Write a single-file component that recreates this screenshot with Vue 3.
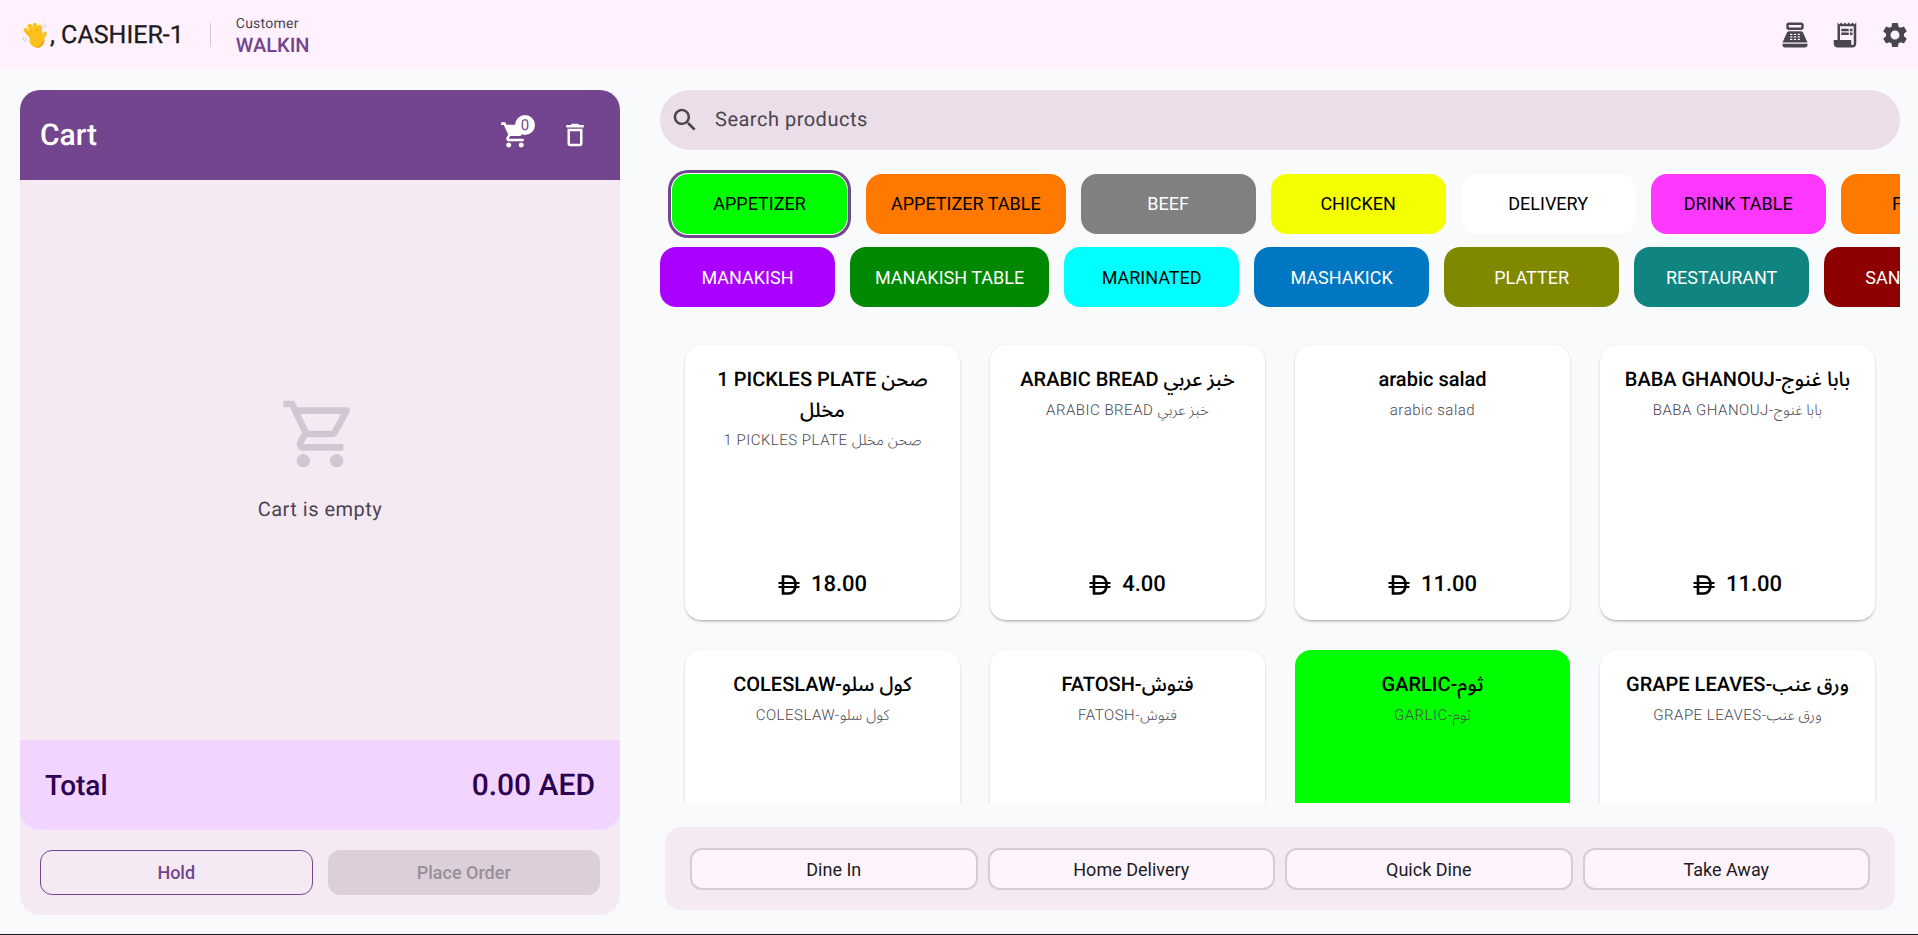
<template>
  <div class="page">
    <header class="topbar">
      <div class="who">
        <svg class="wave" viewBox="0 0 26 26">
          <g fill="none" stroke="#fcc21b" stroke-width="4.4" stroke-linecap="round">
            <path d="M10 15 3.800 8.200" />
            <path d="M12 13 7.800 4" />
            <path d="M15 12 12.800 3" />
            <path d="M18 13 17.800 5" />
            <path d="M19 18 23 11.500" stroke-width="3.800" />
          </g>
          <circle cx="15" cy="18" r="7.600" fill="#fcc21b" />
          <path d="M8 13.500 5.800 11M10.300 11.500 9 8.500M15.200 9.500 14.800 6.500" fill="none" stroke="#e59600" stroke-width=".6" stroke-linecap="round" />
          <path d="M21.500 19c-.8 3.500-3.200 6-6.500 6.400" fill="none" stroke="#f19a14" stroke-width="1.200" stroke-linecap="round" />
          <path d="M1 15.500c.4 1.800 1.300 3.500 2.800 4.800M3.500 15.800c.3 1 .8 2 1.600 2.800M21.500 1.800c1.300.7 2.200 1.800 2.700 3.200M20.800 4c.7.4 1.200 1 1.500 1.700" fill="none" stroke="#b9c6cf" stroke-width=".9" stroke-linecap="round" />
        </svg>
        <span class="cashier">, CASHIER-1</span>
        <i class="divider"></i>
        <div class="customer">
          <small>Customer</small>
          <strong>WALKIN</strong>
        </div>
      </div>
      <div class="top-actions">
        <svg viewBox="0 0 24 24"><path d="M17 2H7C5.900 2 5 2.900 5 4v2c0 1.100.9 2 2 2h10c1.100 0 2-.9 2-2V4c0-1.100-.9-2-2-2zm0 4H7V4h10v2zm3 16H4c-1.100 0-2-.9-2-2v-1h20v1c0 1.100-.9 2-2 2zm-1.470-11.810C18.210 9.470 17.490 9 16.700 9H7.300c-.79 0-1.510.47-1.830 1.190L2 18h20l-3.470-7.810zM9.500 16h-1c-.28 0-.5-.22-.5-.5s.22-.5.5-.5h1c.28 0 .5.22.5.5s-.22.5-.5.5zm0-2h-1c-.28 0-.5-.22-.5-.5s.22-.5.5-.5h1c.28 0 .5.22.5.5s-.22.5-.5.5zm0-2h-1c-.28 0-.5-.22-.5-.5s.22-.5.5-.5h1c.28 0 .5.22.5.5s-.22.5-.5.5zm3 4h-1c-.28 0-.5-.22-.5-.5s.22-.5.5-.5h1c.28 0 .5.22.5.5s-.22.5-.5.5zm0-2h-1c-.28 0-.5-.22-.5-.5s.22-.5.5-.5h1c.28 0 .5.22.5.5s-.22.5-.5.5zm0-2h-1c-.28 0-.5-.22-.5-.5s.22-.5.5-.5h1c.28 0 .5.22.5.5s-.22.5-.5.5zm3 4h-1c-.28 0-.5-.22-.5-.5s.22-.5.5-.5h1c.28 0 .5.22.5.5s-.22.5-.5.5zm0-2h-1c-.28 0-.5-.22-.5-.5s.22-.5.5-.5h1c.28 0 .5.22.5.5s-.22.5-.5.5zm0-2h-1c-.28 0-.5-.22-.5-.5s.22-.5.5-.5h1c.28 0 .5.22.5.5s-.22.5-.5.5z" /></svg>
        <svg viewBox="0 0 24 24"><path d="M19.500 3.500 18 2l-1.500 1.500L15 2l-1.500 1.500L12 2l-1.500 1.500L9 2 7.500 3.500 6 2v14H3v3c0 1.660 1.340 3 3 3h12c1.660 0 3-1.340 3-3V2l-1.500 1.500zM19 19c0 .55-.45 1-1 1s-1-.45-1-1v-3H8V5h11v14z" /><path d="M9 7h6v2H9zm7 0h2v2h-2zm-7 3h6v2H9zm7 0h2v2h-2z" /></svg>
        <svg viewBox="0 0 24 24"><path d="M19.140 12.940c.04-.3.06-.61.06-.94 0-.32-.02-.64-.07-.94l2.030-1.580c.18-.14.23-.41.12-.61l-1.920-3.320c-.12-.22-.37-.29-.59-.22l-2.390.96c-.5-.38-1.030-.7-1.620-.94l-.36-2.540c-.04-.24-.24-.41-.48-.41h-3.840c-.24 0-.43.17-.47.41l-.36 2.540c-.59.24-1.130.57-1.620.94l-2.390-.96c-.22-.08-.47 0-.59.22L2.740 8.870c-.12.21-.08.47.12.61l2.030 1.580c-.05.3-.09.63-.09.94s.02.64.07.94l-2.030 1.580c-.18.14-.23.41-.12.61l1.920 3.320c.12.22.37.29.59.22l2.390-.96c.5.38 1.030.7 1.620.94l.36 2.540c.05.24.24.41.48.41h3.840c.24 0 .44-.17.47-.41l.36-2.540c.59-.24 1.130-.56 1.620-.94l2.390.96c.22.08.47 0 .59-.22l1.920-3.320c.12-.22.07-.47-.12-.61l-2.010-1.580zM12 15.600c-1.980 0-3.600-1.620-3.600-3.600s1.620-3.600 3.600-3.600 3.600 1.620 3.600 3.600-1.620 3.600-3.600 3.600z" /></svg>
      </div>
    </header>

    <main class="main">
      <section class="cart">
        <div class="cart-head">
          <h2>Cart</h2>
          <div class="cart-tools">
            <div class="cart-badge">
              <svg viewBox="0 0 24 24"><path d="M7 18c-1.100 0-1.990.9-1.990 2S5.900 22 7 22s2-.9 2-2-.9-2-2-2zM1 2v2h2l3.600 7.590-1.350 2.450c-.16.28-.25.61-.25.96 0 1.100.9 2 2 2h12v-2H7.420c-.14 0-.25-.11-.25-.25l.03-.12.9-1.830h7.450c.75 0 1.410-.41 1.750-1.030l3.580-6.470c.08-.14.12-.31.12-.48 0-.55-.45-1-1-1H5.210l-.94-2H1zm16 16c-1.100 0-1.990.9-1.990 2s.89 2 1.990 2 2-.9 2-2-.9-2-2-2z" /></svg>
              <span>0</span>
            </div>
            <svg viewBox="0 0 24 24"><path d="M6 19c0 1.100.9 2 2 2h8c1.100 0 2-.9 2-2V7H6v12zM8 9h8v10H8V9zm7.500-5l-1-1h-5l-1 1H5v2h14V4h-3.500z" /></svg>
          </div>
        </div>
        <div class="cart-body">
          <svg viewBox="0 0 24 24"><path d="M15.550 13c.75 0 1.410-.41 1.750-1.030l3.580-6.490c.37-.66-.11-1.480-.87-1.480H5.210l-.94-2H1v2h2l3.600 7.590-1.350 2.440C4.520 15.370 5.480 17 7 17h12v-2H7l1.100-2h7.450zM6.160 6h12.150l-2.760 5H8.530L6.160 6zM7 18c-1.100 0-1.990.9-1.990 2S5.900 22 7 22s2-.9 2-2-.9-2-2-2zm10 0c-1.100 0-1.990.9-1.990 2s.89 2 1.990 2 2-.9 2-2-.9-2-2-2z" /></svg>
          <p>Cart is empty</p>
        </div>
        <div class="cart-total">
          <span>Total</span>
          <span class="amount">0.00 AED</span>
        </div>
        <div class="cart-actions">
          <button class="hold">Hold</button>
          <button class="place" disabled>Place Order</button>
        </div>
      </section>

      <section class="shop">
        <div class="search">
          <svg viewBox="0 0 24 24"><path d="M15.500 14h-.79l-.28-.27C15.410 12.590 16 11.110 16 9.500 16 5.910 13.090 3 9.500 3S3 5.910 3 9.500 5.910 16 9.500 16c1.610 0 3.090-.59 4.230-1.570l.27.28v.79l5 4.990L20.490 19l-4.990-5zm-6 0C7.010 14 5 11.990 5 9.500S7.010 5 9.500 5 14 7.010 14 9.500 11.990 14 9.500 14z" /></svg>
          <span>Search products</span>
        </div>

        <div class="chips first">
          <button v-for="c in rowOne" :key="c.name" class="chip" :class="{ selected: c.selected }" :style="{ background: c.bg, color: c.fg }">{{ c.name }}</button>
        </div>
        <div class="chips">
          <button v-for="c in rowTwo" :key="c.name" class="chip" :style="{ background: c.bg, color: c.fg }">{{ c.name }}</button>
        </div>

        <div class="products">
          <div class="grid">
            <article v-for="p in products" :key="p.sub" class="card" :class="{ green: p.green }">
              <h3>{{ p.title }}</h3>
              <p>{{ p.sub }}</p>
              <div class="price">
                <svg class="dirham" viewBox="0 0 22 20"><path d="M5 1.500h5.500c4.800 0 7 3.500 7 8.500s-2.200 8.500-7 8.500H5z" fill="none" stroke="#000" stroke-width="2.600" /><path d="M.5 8h21M.5 12h21" stroke="#000" stroke-width="2" /></svg>
                <span>{{ p.price }}</span>
              </div>
            </article>
          </div>
        </div>

        <div class="order-types">
          <button v-for="t in orderTypes" :key="t">{{ t }}</button>
        </div>
      </section>
    </main>
  </div>
</template>

<script setup>
const rowOne = [
  { name: 'APPETIZER', bg: '#00ff00', fg: '#000', selected: true },
  { name: 'APPETIZER TABLE', bg: '#ff7800', fg: '#000' },
  { name: 'BEEF', bg: '#808080', fg: '#fff' },
  { name: 'CHICKEN', bg: '#f4ff00', fg: '#000' },
  { name: 'DELIVERY', bg: '#ffffff', fg: '#000' },
  { name: 'DRINK TABLE', bg: '#ff38ff', fg: '#000' },
  { name: 'FATAYER', bg: '#ff7800', fg: '#000' },
]

const rowTwo = [
  { name: 'MANAKISH', bg: '#aa00ff', fg: '#fff' },
  { name: 'MANAKISH TABLE', bg: '#008800', fg: '#fff' },
  { name: 'MARINATED', bg: '#00ffff', fg: '#000' },
  { name: 'MASHAKICK', bg: '#0077c2', fg: '#fff' },
  { name: 'PLATTER', bg: '#808800', fg: '#fff' },
  { name: 'RESTAURANT', bg: '#0f8480', fg: '#fff' },
  { name: 'SANDWICH', bg: '#8e0000', fg: '#fff' },
]

const products = [
  { title: '1 PICKLES PLATE صحن مخلل', sub: '1 PICKLES PLATE صحن مخلل', price: '18.00' },
  { title: 'ARABIC BREAD خبز عربي', sub: 'ARABIC BREAD خبز عربي', price: '4.00' },
  { title: 'arabic salad', sub: 'arabic salad', price: '11.00' },
  { title: 'BABA GHANOUJ-بابا غنوج', sub: 'BABA GHANOUJ-بابا غنوج', price: '11.00' },
  { title: 'COLESLAW-كول سلو', sub: 'COLESLAW-كول سلو', price: '9.00' },
  { title: 'FATOSH-فتوش', sub: 'FATOSH-فتوش', price: '11.00' },
  { title: 'GARLIC-ثوم', sub: 'GARLIC-ثوم', price: '4.00', green: true },
  { title: 'GRAPE LEAVES-ورق عنب', sub: 'GRAPE LEAVES-ورق عنب', price: '11.00' },
]

const orderTypes = ['Dine In', 'Home Delivery', 'Quick Dine', 'Take Away']
</script>

<style scoped>
.page {
  height: 935px;
  box-sizing: border-box;
  border-bottom: 1px solid #1d1b20;
  background: #f9fafc;
  font-family: Roboto, "Noto Sans Arabic", sans-serif;
  text-rendering: geometricPrecision;
  color: #1d1b20;
  display: flex;
  flex-direction: column;
  overflow: hidden;
}
.topbar {
  height: 70px;
  flex: none;
  background: #fff1fe;
  display: flex;
  align-items: center;
  justify-content: space-between;
  padding: 0 8px 0 22px;
}
.who {
  display: flex;
  align-items: center;
}
.wave {
  width: 26px;
  height: 26px;
}
.cashier {
  font-size: 25px;
  margin-left: 2px;
  padding-top: 2px;
  line-height: 28px;
  -webkit-text-stroke: 0.3px #1d1b20;
}
.divider {
  width: 1px;
  height: 24px;
  background: #cfc8d0;
  margin: 0 25px 0 26px;
}
.customer {
  display: flex;
  flex-direction: column;
  padding-top: 2px;
}
.customer small {
  font-size: 14px;
  line-height: 18px;
  letter-spacing: 0.25px;
  color: #49454f;
}
.customer strong {
  font-size: 20px;
  line-height: 24px;
  font-weight: 500;
  color: #74458f;
}
.top-actions {
  display: flex;
  gap: 20px;
}
.top-actions svg {
  width: 30px;
  height: 30px;
  fill: #49454f;
}
.main {
  flex: 1;
  min-height: 0;
  display: flex;
  gap: 40px;
  padding: 20px 18px 19px 20px;
}
.cart {
  width: 600px;
  flex: none;
  background: #f5e9f4;
  border-radius: 20px;
  display: flex;
  flex-direction: column;
  overflow: hidden;
}
.cart-head {
  height: 90px;
  flex: none;
  background: #74458f;
  color: #fff;
  display: flex;
  align-items: center;
  justify-content: space-between;
  padding: 0 30px 0 20px;
}
.cart-head h2 {
  margin: 0;
  font-size: 30px;
  font-weight: 500;
}
.cart-tools {
  display: flex;
  gap: 30px;
}
.cart-tools svg {
  width: 30px;
  height: 30px;
  fill: #fff;
  display: block;
}
.cart-badge {
  position: relative;
}
.cart-badge span {
  position: absolute;
  top: -5px;
  right: -5px;
  width: 20px;
  height: 20px;
  border-radius: 50%;
  background: #fff;
  color: #74458f;
  font-size: 15px;
  line-height: 20px;
  text-align: center;
}
.cart-body {
  flex: 1;
  display: flex;
  flex-direction: column;
  align-items: center;
  justify-content: center;
  padding-bottom: 5px;
}
.cart-body svg {
  width: 80px;
  height: 80px;
  fill: #d2c6d3;
}
.cart-body p {
  margin: 23px 0 0;
  font-size: 20px;
  line-height: 24px;
  letter-spacing: 0.5px;
  color: #49454f;
}
.cart-total {
  height: 90px;
  flex: none;
  background: #f2d5fe;
  border-radius: 0 0 20px 20px;
  display: flex;
  align-items: center;
  justify-content: space-between;
  padding: 0 25px 0 25px;
  font-size: 28px;
  font-weight: 500;
  color: #2d0050;
}
.amount {
  font-size: 30px;
}
.cart-actions {
  display: flex;
  gap: 15px;
  padding: 20px;
}
.cart-actions button {
  flex: 1 1 0;
  height: 45px;
  border-radius: 12px;
  font: 500 18px Roboto, sans-serif;
}
.hold {
  background: transparent;
  border: 1px solid #74458f;
  color: #74458f;
}
.place {
  background: #dccfd9;
  border: 1px solid #dccfd9;
  color: #9a8e99;
}
.shop {
  flex: 1;
  min-width: 0;
  display: flex;
  flex-direction: column;
}
.search {
  height: 60px;
  flex: none;
  border-radius: 30px;
  background: #ebdee8;
  display: flex;
  align-items: center;
  padding-left: 10px;
  color: #49454f;
  font-size: 20px;
  letter-spacing: 0.5px;
}
.search svg {
  width: 30px;
  height: 30px;
  fill: #49454f;
  margin-right: 15px;
}
.search span {
  margin-bottom: 2px;
}
.chips {
  display: flex;
  gap: 15px;
  overflow: hidden;
  margin-top: 13px;
  flex: none;
}
.chips.first {
  margin-top: 20px;
  padding: 4px 0;
  margin-bottom: -4px;
}
.chip {
  flex: none;
  height: 60px;
  min-width: 175px;
  padding: 0 25px;
  border: none;
  border-radius: 16px;
  font: 400 18px Roboto, sans-serif;
}
.chips.first .chip {
  padding-bottom: 2px;
}
.chip.selected {
  margin: 0 4px 0 12px;
  box-shadow: 0 0 0 1px #fff, 0 0 0 4px #74458f;
}
.products {
  flex: 1;
  min-height: 0;
  overflow: hidden;
  margin-top: 15px;
  padding: 23px 25px 0;
}
.grid {
  display: grid;
  grid-template-columns: repeat(4, 275px);
  grid-auto-rows: 275px;
  gap: 30px;
}
.card {
  background: #fff;
  border-radius: 16px;
  box-shadow: 0 2px 3px -1px rgba(0, 0, 0, 0.35), 0 0 2px rgba(0, 0, 0, 0.08);
  display: flex;
  flex-direction: column;
  align-items: center;
  padding: 19px 20px 16px;
  box-sizing: border-box;
  text-align: center;
}
.card.green {
  background: #00ff00;
  box-shadow: none;
}
.card h3 {
  margin: 0;
  font-size: 20px;
  line-height: 30.500px;
  font-weight: 500;
  color: #000;
}
.card p {
  margin: 2px 0 0;
  font-size: 15px;
  font-weight: 300;
  line-height: 27px;
  letter-spacing: 0.5px;
  color: #49454f;
}
.price {
  margin-top: auto;
  display: flex;
  align-items: center;
  gap: 11px;
  font-size: 22px;
  font-weight: 500;
  color: #000;
  padding-bottom: 7px;
}
.dirham {
  width: 22px;
  height: 20px;
}
.order-types {
  flex: none;
  height: 83px;
  margin: 24px 5px 5px;
  box-sizing: border-box;
  background: #f5e9f4;
  border-radius: 16px;
  padding: 21px 25px;
  display: flex;
  gap: 10px;
}
.order-types button {
  flex: 1 1 0;
  height: 42px;
  background: #fdf4fe;
  border: 2px solid #d6cbd6;
  border-radius: 12px;
  color: #1d1b20;
  font: 400 18px Roboto, sans-serif;
}
</style>

<style>
html,
body {
  margin: 0;
  overflow: hidden;
}
</style>
